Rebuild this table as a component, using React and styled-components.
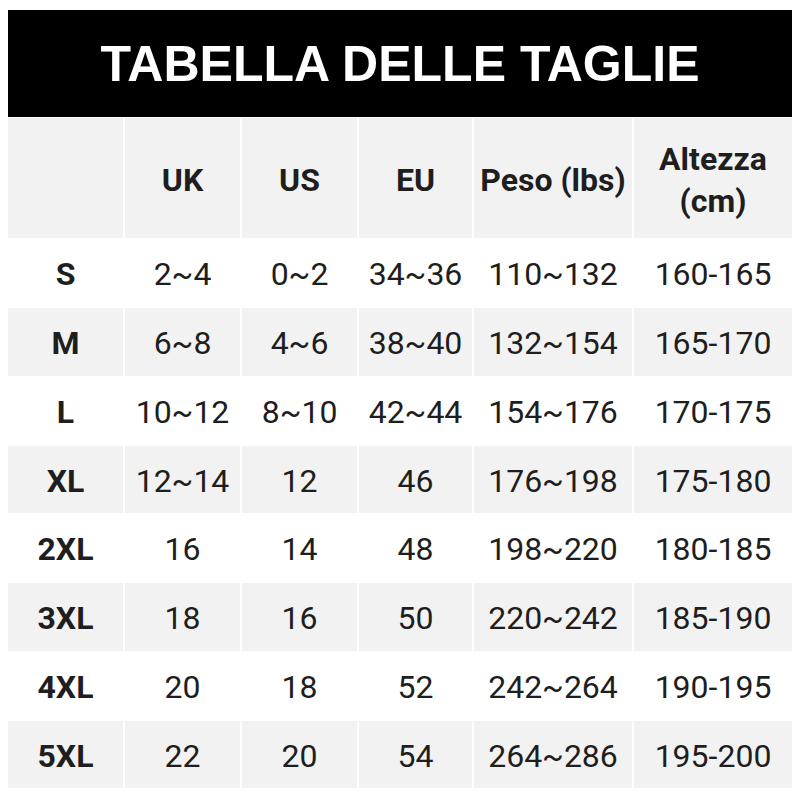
import React from "react";
import styled, { createGlobalStyle } from "styled-components";

const Global = createGlobalStyle`
  html, body { margin: 0; padding: 0; background: #ffffff; }
  body { font-family: Roboto, "Liberation Sans", Arial, sans-serif; }
`;

const Page = styled.div`
  padding: 10px 8px 0 8px;
  width: 784px;
`;

const Banner = styled.div`
  background: #000000;
  height: 107px;
  display: flex;
  align-items: center;
  justify-content: center;
  color: #ffffff;
  font-family: "Liberation Sans", Arial, sans-serif;
  font-weight: 700;
  font-size: 50px;
  padding-top: 1px;
  box-sizing: border-box;
`;

const Grid = styled.div`
  display: grid;
  grid-template-columns: 115px 115px 115px 113px 158px 158px;
  grid-template-rows: 120px repeat(8, 67.3px);
  column-gap: 2px;
  row-gap: 1.5px;
  margin-top: 1px;
`;

const Cell = styled.div`
  background: ${(p) => (p.$shade ? "#f2f2f2" : "#ffffff")};
  display: flex;
  align-items: center;
  justify-content: center;
  text-align: center;
  color: #1e1e1e;
  font-family: Roboto, "Liberation Sans", Arial, sans-serif;
  font-size: 32px;
  font-weight: ${(p) => (p.$bold ? 700 : 400)};
  line-height: ${(p) => (p.$head ? "42px" : "1")};
  padding-top: ${(p) => (p.$head ? "4px" : "2px")};
  box-sizing: border-box;
  white-space: ${(p) => (p.$head ? "normal" : "nowrap")};
`;

const headers = ["", "UK", "US", "EU", "Peso (lbs)", "Altezza (cm)"];

const rows = [
  ["S", "2~4", "0~2", "34~36", "110~132", "160-165"],
  ["M", "6~8", "4~6", "38~40", "132~154", "165-170"],
  ["L", "10~12", "8~10", "42~44", "154~176", "170-175"],
  ["XL", "12~14", "12", "46", "176~198", "175-180"],
  ["2XL", "16", "14", "48", "198~220", "180-185"],
  ["3XL", "18", "16", "50", "220~242", "185-190"],
  ["4XL", "20", "18", "52", "242~264", "190-195"],
  ["5XL", "22", "20", "54", "264~286", "195-200"],
];

export default function App() {
  return (
    <Page>
      <Global />
      <Banner>TABELLA DELLE TAGLIE</Banner>
      <Grid>
        {headers.map((h, i) => (
          <Cell key={"h" + i} $shade $bold $head>
            {i === 5 ? (
              <span>
                Altezza
                <br />
                (cm)
              </span>
            ) : (
              h
            )}
          </Cell>
        ))}
        {rows.map((r, ri) =>
          r.map((v, ci) => (
            <Cell key={ri + "-" + ci} $shade={ri % 2 === 1} $bold={ci === 0}>
              {v}
            </Cell>
          ))
        )}
      </Grid>
    </Page>
  );
}
